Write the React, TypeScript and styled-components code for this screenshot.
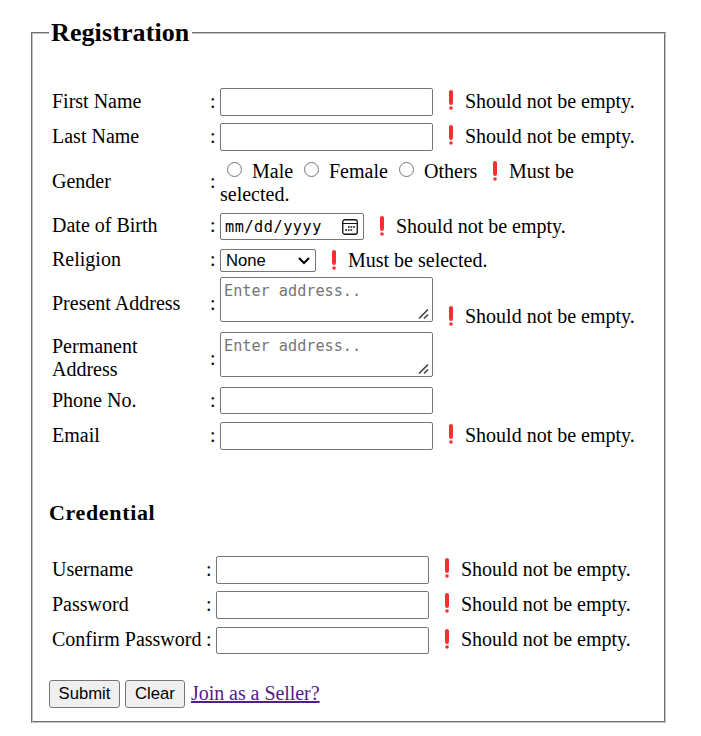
import React from 'react';
import styled, { createGlobalStyle } from 'styled-components';

const GlobalStyle = createGlobalStyle`
  * { box-sizing: border-box; }
  html, body { margin: 0; background: #fff; }
  body { color: #000; font: 20px/23px "Liberation Serif", "Times New Roman", serif; }
`;

const Page = styled.form`
  padding: 19px 35px 13px 31px;
  height: 736px;
`;

const Frame = styled.fieldset`
  margin: 0;
  min-width: 0;
  height: 704px;
  padding: 0 16px;
  border: 2px groove #c4c4c4;
`;

const Title = styled.legend`
  height: 28px;
  padding: 0 3px 0 2px;
  font-size: 26px;
  line-height: 28px;
  font-weight: bold;
  letter-spacing: 0.1px;
`;

const Heading = styled.h3`
  margin: 51px 0 32px;
  font-size: 22px;
  line-height: 23px;
  height: 23px;
  letter-spacing: 0.65px;
`;

const Fields = styled.div<{ $top?: number }>`
  padding: ${(p) => p.$top ?? 0}px 0 0 3px;
`;

const Row = styled.div<{ $colon: number; $height: number; $gap?: number }>`
  display: grid;
  grid-template-columns: ${(p) => p.$colon}px 10px max-content 1fr;
  grid-template-rows: 100%;
  align-items: center;
  height: ${(p) => p.$height}px;
  margin-top: ${(p) => p.$gap ?? 0}px;
`;

const Label = styled.label<{ $drop?: number }>`
  margin-top: ${(p) => p.$drop ?? -2}px;
  white-space: pre-line;
`;

const Colon = styled.span<{ $drop?: number }>`
  margin-top: ${(p) => p.$drop ?? -2}px;
`;

const TextInput = styled.input<{ $height?: number }>`
  width: 213px;
  height: ${(p) => p.$height ?? 28}px;
  margin: 0;
  padding: 1px 3px;
  border: 1px solid #767676;
  border-radius: 2px;
  background: #fff;
  font: 16.67px "Liberation Sans", Arial, sans-serif;
`;

const AddressInput = styled.div`
  position: relative;
  width: 213px;
  height: 45px;
  padding: 2px 3px;
  border: 1px solid #767676;
  border-radius: 2px;
  color: #757575;
  font: 15.2px/22px "DejaVu Sans Mono", monospace;
`;

const Grip = styled.svg`
  position: absolute;
  right: 2px;
  bottom: 1px;
`;

const DateInput = styled.div`
  display: flex;
  align-items: center;
  justify-content: space-between;
  width: 144px;
  height: 27px;
  padding: 0 5px 0 4px;
  border: 1px solid #767676;
  border-radius: 2px;
  font: 15.2px/22px "DejaVu Sans Mono", monospace;
  letter-spacing: 0.55px;
`;

const SelectBox = styled.div`
  display: flex;
  align-items: center;
  justify-content: space-between;
  width: 96px;
  height: 23px;
  padding: 0 5px;
  border: 1px solid #767676;
  border-radius: 2px;
  font: 16.67px/20px "Liberation Sans", Arial, sans-serif;
`;

const ErrorNote = styled.span<{ $drop?: number }>`
  display: flex;
  align-items: center;
  padding-left: 16px;
  margin-top: ${(p) => p.$drop ?? -2}px;
  white-space: nowrap;
`;

const MarkSvg = styled.svg`
  flex: none;
  margin: -2px 12px 0 0;
`;

const GenderBox = styled.div`
  width: 400px;
  height: 45px;
`;

const GenderLine = styled.div`
  display: flex;
  align-items: center;
  height: 23px;
  white-space: nowrap;
`;

const Choice = styled.label<{ $width: number; $indent?: number }>`
  display: flex;
  align-items: center;
  width: ${(p) => p.$width}px;
  padding-left: ${(p) => p.$indent ?? 0}px;
`;

const Radio = styled.input`
  appearance: none;
  flex: none;
  width: 15px;
  height: 15px;
  margin: 0 10px 5px 0;
  border: 1px solid #767676;
  border-radius: 50%;
  background: #fff;
`;

const Actions = styled.div`
  display: flex;
  align-items: center;
  gap: 5px;
  height: 28px;
  margin-top: 26px;
`;

const Button = styled.button<{ $width: number }>`
  width: ${(p) => p.$width}px;
  height: 28px;
  padding: 0 0 1px;
  border: 1px solid #767676;
  border-radius: 3px;
  background: #efefef;
  color: #000;
  font: 16.67px/20px "Liberation Sans", Arial, sans-serif;
`;

const SellerLink = styled.a`
  margin-top: -2px;
  padding-left: 1px;
  color: #551a8b;
  text-decoration: underline;
  text-decoration-thickness: 2px;
  text-underline-offset: 1px;
  letter-spacing: -0.05px;
`;

const Mark = () => (
  <MarkSvg width="4" height="20" viewBox="0 0 4 20">
    <path d="M0 2Q0 0 2 0T4 2V12Q4 15 2 15T0 12Z" fill="#f92f2f" />
    <circle cx="2" cy="18" r="1.8" fill="#f92f2f" />
  </MarkSvg>
);

const Note = ({ text = 'Should not be empty.', drop }: { text?: string; drop?: number }) => (
  <ErrorNote $drop={drop}>
    <Mark />
    {text}
  </ErrorNote>
);

const Address = () => (
  <AddressInput>
    Enter address..
    <Grip width="12" height="12" viewBox="0 0 12 12">
      <path d="M1 10.5 10 1.5M6 10.5 10 6.5" stroke="#444" strokeWidth="1.6" fill="none" />
    </Grip>
  </AddressInput>
);

export default function App() {
  return (
    <>
      <GlobalStyle />
      <Page>
        <Frame>
          <Title>Registration</Title>
          <Fields $top={41}>
            <Row $colon={158} $height={28}>
              <Label>First Name</Label><Colon>:</Colon><TextInput /><Note />
            </Row>
            <Row $colon={158} $height={28} $gap={7}>
              <Label>Last Name</Label><Colon>:</Colon><TextInput /><Note />
            </Row>
            <Row $colon={158} $height={45} $gap={9}>
              <Label>Gender</Label><Colon>:</Colon>
              <GenderBox>
                <GenderLine>
                  <Choice $width={84} $indent={7}><Radio type="radio" name="gender" />Male</Choice>
                  <Choice $width={95}><Radio type="radio" name="gender" />Female</Choice>
                  <Choice $width={78}><Radio type="radio" name="gender" />Others</Choice>
                  <Note text="Must be" drop={0} />
                </GenderLine>
                <GenderLine>selected.</GenderLine>
              </GenderBox>
            </Row>
            <Row $colon={158} $height={27} $gap={8}>
              <Label>Date of Birth</Label><Colon>:</Colon>
              <DateInput>
                mm/dd/yyyy
                <svg width="16" height="16" viewBox="0 0 16 16" fill="none" stroke="#111">
                  <rect x=".75" y=".75" width="14.5" height="14.5" rx="2" strokeWidth="1.3" />
                  <path d="M1 4.5h14" />
                  <path d="M6 8h7M3.3 11h7" strokeWidth="1.7" strokeDasharray="1.7 .9" />
                </svg>
              </DateInput>
              <Note drop={0} />
            </Row>
            <Row $colon={158} $height={23} $gap={9}>
              <Label>Religion</Label><Colon>:</Colon>
              <SelectBox>
                None
                <svg width="12" height="8" viewBox="0 0 12 8"><path d="m1 1 5 5 5-5" fill="none" stroke="#000" strokeWidth="2" /></svg>
              </SelectBox>
              <Note text="Must be selected." drop={0} />
            </Row>
            <Row $colon={158} $height={45} $gap={5}>
              <Label $drop={7}>Present Address</Label><Colon $drop={7}>:</Colon><Address /><Note drop={34} />
            </Row>
            <Row $colon={158} $height={45} $gap={10}>
              <Label $drop={7}>{'Permanent\nAddress'}</Label><Colon $drop={7}>:</Colon><Address />
            </Row>
            <Row $colon={158} $height={27} $gap={10}>
              <Label $drop={0}>Phone No.</Label><Colon $drop={0}>:</Colon><TextInput $height={27} />
            </Row>
            <Row $colon={158} $height={28} $gap={8}>
              <Label>Email</Label><Colon>:</Colon><TextInput /><Note />
            </Row>
          </Fields>
          <Heading>Credential</Heading>
          <Fields>
            <Row $colon={154} $height={28}>
              <Label>Username</Label><Colon>:</Colon><TextInput type="text" /><Note />
            </Row>
            <Row $colon={154} $height={28} $gap={7}>
              <Label>Password</Label><Colon>:</Colon><TextInput type="password" /><Note />
            </Row>
            <Row $colon={154} $height={27} $gap={8}>
              <Label>Confirm&nbsp;Password</Label><Colon>:</Colon><TextInput type="password" $height={27} /><Note />
            </Row>
          </Fields>
          <Actions>
            <Button type="submit" $width={71}>Submit</Button>
            <Button type="reset" $width={60}>Clear</Button>
            <SellerLink href="#">Join as a Seller?</SellerLink>
          </Actions>
        </Frame>
      </Page>
    </>
  );
}
